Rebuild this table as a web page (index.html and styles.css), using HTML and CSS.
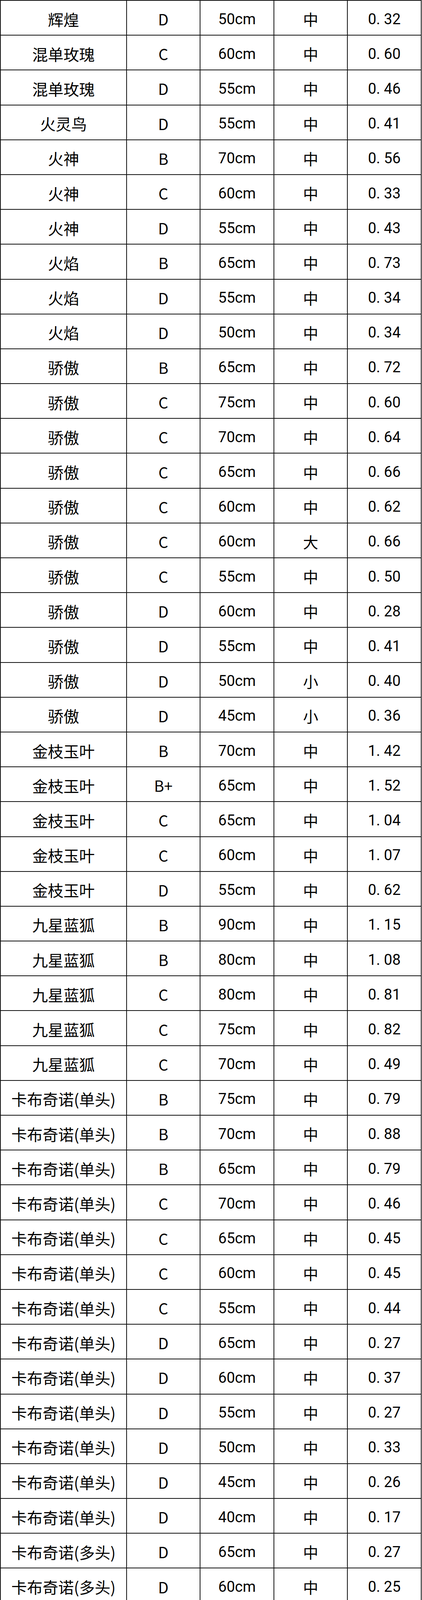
FILE: index.html
```html
<!DOCTYPE html>
<html lang="zh-CN">
<head>
<meta charset="utf-8">
<title>价格表</title>
<link rel="stylesheet" href="styles.css">
</head>
<body>
<div class="price-table" role="table">
<div class="row" role="row"><div class="cell name">辉煌</div><div class="cell grade">D</div><div class="cell len">50cm</div><div class="cell size">中</div><div class="cell price">0. 32</div></div>
<div class="row" role="row"><div class="cell name">混单玫瑰</div><div class="cell grade">C</div><div class="cell len">60cm</div><div class="cell size">中</div><div class="cell price">0. 60</div></div>
<div class="row" role="row"><div class="cell name">混单玫瑰</div><div class="cell grade">D</div><div class="cell len">55cm</div><div class="cell size">中</div><div class="cell price">0. 46</div></div>
<div class="row" role="row"><div class="cell name">火灵鸟</div><div class="cell grade">D</div><div class="cell len">55cm</div><div class="cell size">中</div><div class="cell price">0. 41</div></div>
<div class="row" role="row"><div class="cell name">火神</div><div class="cell grade">B</div><div class="cell len">70cm</div><div class="cell size">中</div><div class="cell price">0. 56</div></div>
<div class="row" role="row"><div class="cell name">火神</div><div class="cell grade">C</div><div class="cell len">60cm</div><div class="cell size">中</div><div class="cell price">0. 33</div></div>
<div class="row" role="row"><div class="cell name">火神</div><div class="cell grade">D</div><div class="cell len">55cm</div><div class="cell size">中</div><div class="cell price">0. 43</div></div>
<div class="row" role="row"><div class="cell name">火焰</div><div class="cell grade">B</div><div class="cell len">65cm</div><div class="cell size">中</div><div class="cell price">0. 73</div></div>
<div class="row" role="row"><div class="cell name">火焰</div><div class="cell grade">D</div><div class="cell len">55cm</div><div class="cell size">中</div><div class="cell price">0. 34</div></div>
<div class="row" role="row"><div class="cell name">火焰</div><div class="cell grade">D</div><div class="cell len">50cm</div><div class="cell size">中</div><div class="cell price">0. 34</div></div>
<div class="row" role="row"><div class="cell name">骄傲</div><div class="cell grade">B</div><div class="cell len">65cm</div><div class="cell size">中</div><div class="cell price">0. 72</div></div>
<div class="row" role="row"><div class="cell name">骄傲</div><div class="cell grade">C</div><div class="cell len">75cm</div><div class="cell size">中</div><div class="cell price">0. 60</div></div>
<div class="row" role="row"><div class="cell name">骄傲</div><div class="cell grade">C</div><div class="cell len">70cm</div><div class="cell size">中</div><div class="cell price">0. 64</div></div>
<div class="row" role="row"><div class="cell name">骄傲</div><div class="cell grade">C</div><div class="cell len">65cm</div><div class="cell size">中</div><div class="cell price">0. 66</div></div>
<div class="row" role="row"><div class="cell name">骄傲</div><div class="cell grade">C</div><div class="cell len">60cm</div><div class="cell size">中</div><div class="cell price">0. 62</div></div>
<div class="row" role="row"><div class="cell name">骄傲</div><div class="cell grade">C</div><div class="cell len">60cm</div><div class="cell size">大</div><div class="cell price">0. 66</div></div>
<div class="row" role="row"><div class="cell name">骄傲</div><div class="cell grade">C</div><div class="cell len">55cm</div><div class="cell size">中</div><div class="cell price">0. 50</div></div>
<div class="row" role="row"><div class="cell name">骄傲</div><div class="cell grade">D</div><div class="cell len">60cm</div><div class="cell size">中</div><div class="cell price">0. 28</div></div>
<div class="row" role="row"><div class="cell name">骄傲</div><div class="cell grade">D</div><div class="cell len">55cm</div><div class="cell size">中</div><div class="cell price">0. 41</div></div>
<div class="row" role="row"><div class="cell name">骄傲</div><div class="cell grade">D</div><div class="cell len">50cm</div><div class="cell size">小</div><div class="cell price">0. 40</div></div>
<div class="row" role="row"><div class="cell name">骄傲</div><div class="cell grade">D</div><div class="cell len">45cm</div><div class="cell size">小</div><div class="cell price">0. 36</div></div>
<div class="row" role="row"><div class="cell name">金枝玉叶</div><div class="cell grade">B</div><div class="cell len">70cm</div><div class="cell size">中</div><div class="cell price">1. 42</div></div>
<div class="row" role="row"><div class="cell name">金枝玉叶</div><div class="cell grade">B+</div><div class="cell len">65cm</div><div class="cell size">中</div><div class="cell price">1. 52</div></div>
<div class="row" role="row"><div class="cell name">金枝玉叶</div><div class="cell grade">C</div><div class="cell len">65cm</div><div class="cell size">中</div><div class="cell price">1. 04</div></div>
<div class="row" role="row"><div class="cell name">金枝玉叶</div><div class="cell grade">C</div><div class="cell len">60cm</div><div class="cell size">中</div><div class="cell price">1. 07</div></div>
<div class="row" role="row"><div class="cell name">金枝玉叶</div><div class="cell grade">D</div><div class="cell len">55cm</div><div class="cell size">中</div><div class="cell price">0. 62</div></div>
<div class="row" role="row"><div class="cell name">九星蓝狐</div><div class="cell grade">B</div><div class="cell len">90cm</div><div class="cell size">中</div><div class="cell price">1. 15</div></div>
<div class="row" role="row"><div class="cell name">九星蓝狐</div><div class="cell grade">B</div><div class="cell len">80cm</div><div class="cell size">中</div><div class="cell price">1. 08</div></div>
<div class="row" role="row"><div class="cell name">九星蓝狐</div><div class="cell grade">C</div><div class="cell len">80cm</div><div class="cell size">中</div><div class="cell price">0. 81</div></div>
<div class="row" role="row"><div class="cell name">九星蓝狐</div><div class="cell grade">C</div><div class="cell len">75cm</div><div class="cell size">中</div><div class="cell price">0. 82</div></div>
<div class="row" role="row"><div class="cell name">九星蓝狐</div><div class="cell grade">C</div><div class="cell len">70cm</div><div class="cell size">中</div><div class="cell price">0. 49</div></div>
<div class="row" role="row"><div class="cell name">卡布奇诺(单头)</div><div class="cell grade">B</div><div class="cell len">75cm</div><div class="cell size">中</div><div class="cell price">0. 79</div></div>
<div class="row" role="row"><div class="cell name">卡布奇诺(单头)</div><div class="cell grade">B</div><div class="cell len">70cm</div><div class="cell size">中</div><div class="cell price">0. 88</div></div>
<div class="row" role="row"><div class="cell name">卡布奇诺(单头)</div><div class="cell grade">B</div><div class="cell len">65cm</div><div class="cell size">中</div><div class="cell price">0. 79</div></div>
<div class="row" role="row"><div class="cell name">卡布奇诺(单头)</div><div class="cell grade">C</div><div class="cell len">70cm</div><div class="cell size">中</div><div class="cell price">0. 46</div></div>
<div class="row" role="row"><div class="cell name">卡布奇诺(单头)</div><div class="cell grade">C</div><div class="cell len">65cm</div><div class="cell size">中</div><div class="cell price">0. 45</div></div>
<div class="row" role="row"><div class="cell name">卡布奇诺(单头)</div><div class="cell grade">C</div><div class="cell len">60cm</div><div class="cell size">中</div><div class="cell price">0. 45</div></div>
<div class="row" role="row"><div class="cell name">卡布奇诺(单头)</div><div class="cell grade">C</div><div class="cell len">55cm</div><div class="cell size">中</div><div class="cell price">0. 44</div></div>
<div class="row" role="row"><div class="cell name">卡布奇诺(单头)</div><div class="cell grade">D</div><div class="cell len">65cm</div><div class="cell size">中</div><div class="cell price">0. 27</div></div>
<div class="row" role="row"><div class="cell name">卡布奇诺(单头)</div><div class="cell grade">D</div><div class="cell len">60cm</div><div class="cell size">中</div><div class="cell price">0. 37</div></div>
<div class="row" role="row"><div class="cell name">卡布奇诺(单头)</div><div class="cell grade">D</div><div class="cell len">55cm</div><div class="cell size">中</div><div class="cell price">0. 27</div></div>
<div class="row" role="row"><div class="cell name">卡布奇诺(单头)</div><div class="cell grade">D</div><div class="cell len">50cm</div><div class="cell size">中</div><div class="cell price">0. 33</div></div>
<div class="row" role="row"><div class="cell name">卡布奇诺(单头)</div><div class="cell grade">D</div><div class="cell len">45cm</div><div class="cell size">中</div><div class="cell price">0. 26</div></div>
<div class="row" role="row"><div class="cell name">卡布奇诺(单头)</div><div class="cell grade">D</div><div class="cell len">40cm</div><div class="cell size">中</div><div class="cell price">0. 17</div></div>
<div class="row" role="row"><div class="cell name">卡布奇诺(多头)</div><div class="cell grade">D</div><div class="cell len">65cm</div><div class="cell size">中</div><div class="cell price">0. 27</div></div>
<div class="row" role="row"><div class="cell name">卡布奇诺(多头)</div><div class="cell grade">D</div><div class="cell len">60cm</div><div class="cell size">中</div><div class="cell price">0. 25</div></div>
<div class="row" role="row"><div class="cell name">卡罗拉（网）</div><div class="cell grade">B</div><div class="cell len">90cm</div><div class="cell size">中</div><div class="cell price">0. 58</div></div>
<div class="row" role="row"><div class="cell name">卡罗拉（网）</div><div class="cell grade">B</div><div class="cell len">85cm</div><div class="cell size">中</div><div class="cell price">0. 57</div></div>
<div class="row" role="row"><div class="cell name">卡罗拉（网）</div><div class="cell grade">B</div><div class="cell len">80cm</div><div class="cell size">中</div><div class="cell price">0. 56</div></div>
<div class="row" role="row"><div class="cell name">卡罗拉（网）</div><div class="cell grade">B</div><div class="cell len">75cm</div><div class="cell size">中</div><div class="cell price">0. 56</div></div>
<div class="row" role="row"><div class="cell name">卡罗拉（网）</div><div class="cell grade">C</div><div class="cell len">75cm</div><div class="cell size">中</div><div class="cell price">0. 54</div></div>
<div class="row" role="row"><div class="cell name">卡罗拉（网）</div><div class="cell grade">C</div><div class="cell len">70cm</div><div class="cell size">中</div><div class="cell price">0. 53</div></div>
<div class="row" role="row"><div class="cell name">卡罗拉（网）</div><div class="cell grade">D</div><div class="cell len">60cm</div><div class="cell size">中</div><div class="cell price">0. 38</div></div>
<div class="row" role="row"><div class="cell name">卡罗拉（网）</div><div class="cell grade">D</div><div class="cell len">55cm</div><div class="cell size">中</div><div class="cell price">0. 32</div></div>
<div class="row" role="row"><div class="cell name">康斯坦茨</div><div class="cell grade">B</div><div class="cell len">80cm</div><div class="cell size">中</div><div class="cell price">1. 36</div></div>
<div class="row" role="row"><div class="cell name">康斯坦茨</div><div class="cell grade">C</div><div class="cell len">60cm</div><div class="cell size">中</div><div class="cell price">1. 01</div></div>
<div class="row" role="row"><div class="cell name">洛神</div><div class="cell grade">B</div><div class="cell len">70cm</div><div class="cell size">中</div><div class="cell price">0. 97</div></div>
<div class="row" role="row"><div class="cell name">洛神</div><div class="cell grade">B</div><div class="cell len">65cm</div><div class="cell size">中</div><div class="cell price">0. 87</div></div>
<div class="row" role="row"><div class="cell name">洛神</div><div class="cell grade">C</div><div class="cell len">65cm</div><div class="cell size">中</div><div class="cell price">0. 67</div></div>
<div class="row" role="row"><div class="cell name">洛神</div><div class="cell grade">C</div><div class="cell len">60cm</div><div class="cell size">中</div><div class="cell price">0. 90</div></div>
<div class="row" role="row"><div class="cell name">洛神</div><div class="cell grade">D</div><div class="cell len">55cm</div><div class="cell size">中</div><div class="cell price">0. 67</div></div>
<div class="row" role="row"><div class="cell name">洛神</div><div class="cell grade">D</div><div class="cell len">50cm</div><div class="cell size">中</div><div class="cell price">0. 67</div></div>
<div class="row" role="row"><div class="cell name">曼塔</div><div class="cell grade">A</div><div class="cell len">75cm</div><div class="cell size">中</div><div class="cell price">0. 79</div></div>
<div class="row" role="row"><div class="cell name">曼塔</div><div class="cell grade">A</div><div class="cell len">70cm</div><div class="cell size">中</div><div class="cell price">0. 79</div></div>
<div class="row" role="row"><div class="cell name">曼塔</div><div class="cell grade">A</div><div class="cell len">70cm</div><div class="cell size">大</div><div class="cell price">0. 87</div></div>
<div class="row" role="row"><div class="cell name">曼塔</div><div class="cell grade">B</div><div class="cell len">70cm</div><div class="cell size">中</div><div class="cell price">0. 62</div></div>
<div class="row" role="row"><div class="cell name">曼塔</div><div class="cell grade">B</div><div class="cell len">70cm</div><div class="cell size">大</div><div class="cell price">0. 57</div></div>
<div class="row" role="row"><div class="cell name">曼塔</div><div class="cell grade">B</div><div class="cell len">65cm</div><div class="cell size">中</div><div class="cell price">0. 56</div></div>
<div class="row" role="row"><div class="cell name">曼塔</div><div class="cell grade">B</div><div class="cell len">65cm</div><div class="cell size">大</div><div class="cell price">0. 54</div></div>
</div>
</body>
</html>
```

FILE: styles.css
```css
html, body {
  margin: 0;
  padding: 0;
  background: #ffffff;
}

body {
  width: 1080px;
  color: #000000;
  font-family: "Noto Sans CJK SC", "Noto Sans", sans-serif;
}

.price-table {
  width: 1079px;
  box-sizing: border-box;
  border-top: 2px solid #111111;
  border-left: 2px solid #111111;
  display: flex;
  flex-direction: column;
}

.row {
  display: grid;
  grid-template-columns: 323px 188px 189px 188px 1fr;
  height: 89.2px;
  flex: 0 0 89.2px;
  box-sizing: border-box;
}

.cell {
  box-sizing: border-box;
  border-right: 2px solid #111111;
  border-bottom: 2px solid #111111;
  display: flex;
  align-items: center;
  justify-content: center;
  padding-top: 6px;
  white-space: nowrap;
  overflow: hidden;
  line-height: 1;
  font-size: 39px;
}

.name,
.size,
.grade {
  font-family: "Noto Sans CJK SC", "Noto Sans", sans-serif;
}

.name {
  font-size: 40px;
}

.len,
.price {
  font-family: Roboto, "Liberation Sans", sans-serif;
  font-size: 38px;
}
```
